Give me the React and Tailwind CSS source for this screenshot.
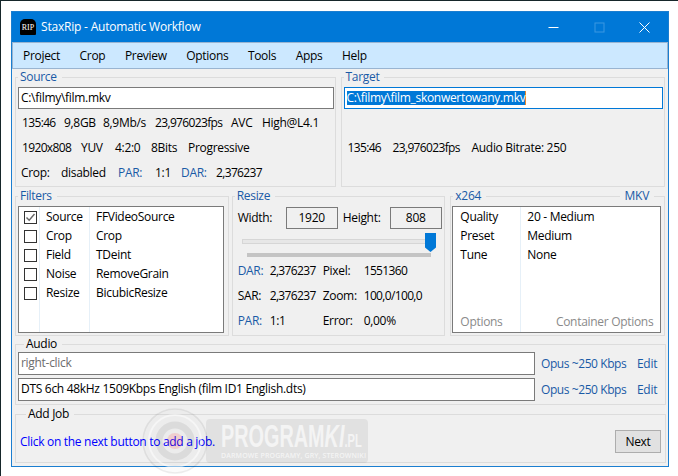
import React from "react";

const BLUE = "text-[#1a5aa6]";
const NUM = "tracking-[-0.65px]";

function Group({ title, className = "", legendClass = "ml-[2px] text-[#1a5aa6]", children }) {
  return (
    <fieldset className={`relative min-w-0 border border-[#dcdcdc] ${className}`}>
      <legend className={`pl-[2px] pr-[5px] text-[12px] leading-[14px] ${legendClass}`}>{title}</legend>
      {children}
    </fieldset>
  );
}

function Check({ checked }) {
  return (
    <span className="flex h-[13px] w-[13px] items-center justify-center border border-[#333] bg-white">
      {checked && (
        <svg width="11" height="11" viewBox="0 0 11 11" fill="none">
          <path d="M1.5 5.5 L4.2 8.3 L9.5 2" stroke="#666" strokeWidth="1.4" />
        </svg>
      )}
    </span>
  );
}

const filters = [
  ["Source", "FFVideoSource", true],
  ["Crop", "Crop"],
  ["Field", "TDeint"],
  ["Noise", "RemoveGrain"],
  ["Resize", "BicubicResize"],
];

const Menu = ["Project", "Crop", "Preview", "Options", "Tools", "Apps", "Help"];

function Watermark() {
  return (
    <div className="pointer-events-none absolute left-[141px] top-[407px] flex items-center">
      <svg width="66" height="66" viewBox="0 0 66 66" className="shrink-0">
        <circle cx="33" cy="33" r="32" fill="#000" fillOpacity="0.015" stroke="#000" strokeOpacity="0.07" strokeWidth="1.5" />
        <circle cx="33" cy="33" r="26" fill="none" stroke="#fff" strokeOpacity="0.5" strokeWidth="2" />
        <circle cx="33" cy="33" r="16" fill="none" stroke="#000" strokeOpacity="0.07" strokeWidth="7" />
        <circle cx="33" cy="33" r="8" fill="#ff3030" fillOpacity="0.16" />
      </svg>
      <div className="-ml-[2px] flex h-[44px] w-[162px] flex-col rounded-[4px] bg-[#000000]/[0.06] pl-[15px] pt-[2px]">
        <div className="flex h-[31px] w-[220px] origin-left scale-x-[0.62] items-baseline whitespace-nowrap font-['Liberation_Sans'] font-bold tracking-normal text-[#f4f4f4]">
          <span className="text-[32px] leading-[31px]">PROGRAM</span>
          <span className="text-[32px] italic leading-[31px]">KI</span>
          <span className="text-[18px] leading-[31px]">.PL</span>
        </div>
        <span className="whitespace-nowrap text-[7px] font-semibold leading-[8px] tracking-[0.12px] text-[#f4f4f4]">DARMOWE PROGRAMY, GRY, STEROWNIKI</span>
      </div>
    </div>
  );
}

export default function App() {
  return (
    <div className="relative h-[476px] w-[678px] overflow-hidden border-l border-t border-[#16262a] bg-white pl-[10px] pt-[10px] font-['Open_Sans','Noto_Sans',sans-serif] text-[12px] tracking-[-0.3px] text-black">
      <div className="flex h-[456px] w-[658px] flex-col border border-[#1b7ed0] bg-[#f0f0f0]">
        <div className="flex h-[30px] shrink-0 items-center bg-[#0078d7] pl-[8px] text-white">
          <span className="flex h-[16px] w-[16px] items-center justify-center rounded-b-[1px] rounded-t-[5px] bg-black pt-[1px] font-['Liberation_Serif'] text-[8px] leading-none tracking-normal text-white">RIP</span>
          <span className="ml-[5px] text-[12px] tracking-[-0.2px]">StaxRip - Automatic Workflow</span>
          <div className="ml-auto flex items-center pr-[18px]">
            <svg width="11" height="11" viewBox="0 0 11 11" className="mr-[35px]"><path d="M0.5 5.5H10.5" stroke="#fff" /></svg>
            <svg width="11" height="11" viewBox="0 0 11 11" className="mr-[34px]"><rect x="1" y="1" width="9" height="9" fill="none" stroke="#3a97e2" /></svg>
            <svg width="11" height="11" viewBox="0 0 11 11"><path d="M0.5 0.5L10.5 10.5M10.5 0.5L0.5 10.5" stroke="#fff" /></svg>
          </div>
        </div>
        <div className="flex h-[27px] shrink-0 items-center gap-[19.5px] border border-[#99b4d1] bg-[#cce8ff] pl-[10px] text-[12px]">
          {Menu.map((m) => <span key={m}>{m}</span>)}
        </div>
        <div className="flex flex-1 flex-col px-[3px] pt-[1px]">
          <div className="flex gap-[5px]">
            <Group title="Source" className="h-[117px] w-[321px] pt-[3px]">
              <div className="ml-[2px] flex h-[22px] w-[316px] items-center border border-[#7a7a7a] bg-white pb-[1px] pl-[2px]">C:\filmy\film.mkv</div>
              <div className="ml-[6px] mt-[6px] grid grid-cols-[42px_39px_52px_76px_31px_auto] whitespace-nowrap leading-[16px]">
                <span className={NUM}>135:46</span><span>9,8GB</span><span>8,9Mb/s</span><span className={NUM}>23,976023fps</span><span>AVC</span><span>High@L4.1</span>
              </div>
              <div className="ml-[6px] mt-[9px] grid grid-cols-[59px_34px_36px_37px_auto] whitespace-nowrap leading-[16px]">
                <span className={NUM}>1920x808</span><span>YUV</span><span>4:2:0</span><span>8Bits</span><span>Progressive</span>
              </div>
              <div className="ml-[5px] mt-[9px] grid grid-cols-[40px_57px_37px_26px_35px_auto] whitespace-nowrap leading-[16px]">
                <span>Crop:</span><span>disabled</span><span className={BLUE}>PAR:</span><span>1:1</span><span className={BLUE}>DAR:</span><span className={NUM}>2,376237</span>
              </div>
            </Group>
            <Group title="Target" className="h-[117px] w-[325px] pt-[3px]">
              <div className="ml-[2px] flex h-[22px] w-[319px] items-center border border-[#0078d7] bg-white pb-[1px] pl-[2px]">
                <span className="h-[14px] whitespace-nowrap border-r border-[#e8862a] bg-[#0078d7] leading-[14px] text-white">C:\filmy\film_skonwertowany.mkv</span>
              </div>
              <div className="ml-[6px] mt-[31px] grid grid-cols-[45px_79px_auto] whitespace-nowrap leading-[16px]">
                <span className={NUM}>135:46</span><span className={NUM}>23,976023fps</span><span>Audio Bitrate: 250</span>
              </div>
            </Group>
          </div>
          <div className="mt-[2px] flex">
            <Group title="Filters" className="h-[147px] w-[214px] pt-[3px]">
              <div className="ml-[2px] flex h-[127px] w-[206px] border border-[#7a7a7a] bg-white pt-0">
                <div className="w-[21px] shrink-0 border-r border-[#e6f0f8] pl-[5px] pt-[1px]">
                  {filters.map(([n, , c]) => <div key={n} className="flex h-[19px] items-center"><Check checked={c} /></div>)}
                </div>
                <div className="w-[50px] shrink-0 border-r border-[#e6f0f8] pl-[6px]">
                  {filters.map(([n]) => <div key={n} className="flex h-[19px] items-center">{n}</div>)}
                </div>
                <div className="pl-[6px]">
                  {filters.map(([n, v]) => <div key={n} className="flex h-[19px] items-center">{v}</div>)}
                </div>
              </div>
            </Group>
            <Group title="Resize" className="ml-[3px] h-[147px] w-[214px] pt-[4px]">
              <div className="pl-[5px]">
                <div className="flex h-[22px] items-center">
                  <span className="w-[48px] shrink-0">Width:</span>
                  <span className="flex h-[22px] w-[52px] shrink-0 items-center justify-center border border-[#7a7a7a]">1920</span>
                  <span className="ml-[5px] w-[47px] shrink-0">Height:</span>
                  <span className="flex h-[22px] w-[52px] shrink-0 items-center justify-center border border-[#7a7a7a]">808</span>
                </div>
                <div className="relative mt-[4px] h-[19px] pt-[6px]">
                  <div className="ml-[4px] h-[5px] w-[186px] border border-[#d6d6d6] bg-[#e7e7e7]" />
                  <svg width="11" height="19" viewBox="0 0 11 19" className="absolute left-[187px] top-0"><path d="M0 0H11V14.5L5.5 19L0 14.5Z" fill="#0078d7" /></svg>
                </div>
                <div className="ml-[9px] mt-[1px] h-[4px] w-[184px] bg-[#c4c4c4]" />
                <div className="mt-[6px] grid grid-cols-[32px_53px_41px_auto] gap-y-[9px] whitespace-nowrap leading-[16px]">
                  <span className={BLUE}>DAR:</span><span className={NUM}>2,376237</span><span>Pixel:</span><span className={NUM}>1551360</span>
                  <span>SAR:</span><span className={NUM}>2,376237</span><span>Zoom:</span><span className={NUM}>100,0/100,0</span>
                  <span className={BLUE}>PAR:</span><span>1:1</span><span>Error:</span><span>0,00%</span>
                </div>
              </div>
            </Group>
            <Group title="x264" className="ml-[5px] h-[147px] w-[215px] pt-[3px]">
              <span className="absolute right-[10px] top-[-14px] bg-[#f0f0f0] px-[5px] leading-[14px] text-[#1a5aa6]">MKV</span>
              <div className="ml-[1px] flex h-[127px] w-[209px] border border-[#7a7a7a] bg-white">
                <div className="flex w-[68px] shrink-0 flex-col border-r border-[#e6f0f8] pl-[7px]">
                  {["Quality", "Preset", "Tune"].map((t) => <div key={t} className="flex h-[19px] items-center">{t}</div>)}
                  <div className="mt-auto pb-[2px] leading-[16px] text-[#8a8a8a]">Options</div>
                </div>
                <div className="flex flex-1 flex-col pl-[6px]">
                  {["20 - Medium", "Medium", "None"].map((t) => <div key={t} className="flex h-[19px] items-center">{t}</div>)}
                  <div className="mt-auto self-end whitespace-nowrap pb-[2px] pr-[7px] leading-[16px] text-[#8a8a8a]">Container Options</div>
                </div>
              </div>
            </Group>
          </div>
          <Group title="Audio" legendClass="ml-[6px] text-black" className="mt-[1px] h-[68px] w-[651px] px-[2px] pt-[1px]">
            {["right-click", "DTS 6ch 48kHz 1509Kbps English (film ID1 English.dts)"].map((t, i) => (
              <div key={t} className={`flex items-center whitespace-nowrap ${i ? "mt-[3px]" : ""}`}>
                <div className={`flex h-[23px] w-[517px] shrink-0 items-center border border-[#7a7a7a] bg-white pb-[1px] pl-[2px] ${i ? "" : "text-[#6d6d6d]"}`}>{t}</div>
                <span className={`ml-[6px] w-[96px] tracking-[-0.42px] ${BLUE}`}>Opus ~250 Kbps</span>
                <span className={BLUE}>Edit</span>
              </div>
            ))}
          </Group>
          <Group title="Add Job" legendClass="ml-[6px] text-black" className="mt-[2px] h-[56px] w-[651px] px-[4px]">
            <div className="flex items-center justify-between pt-[9px]">
              <span className="text-[#0000ff]">Click on the next button to add a job.</span>
              <span className="flex h-[23px] w-[46px] items-center justify-center border border-[#adadad] bg-[#e1e1e1]">Next</span>
            </div>
          </Group>
        </div>
      </div>
      <Watermark />
    </div>
  );
}
